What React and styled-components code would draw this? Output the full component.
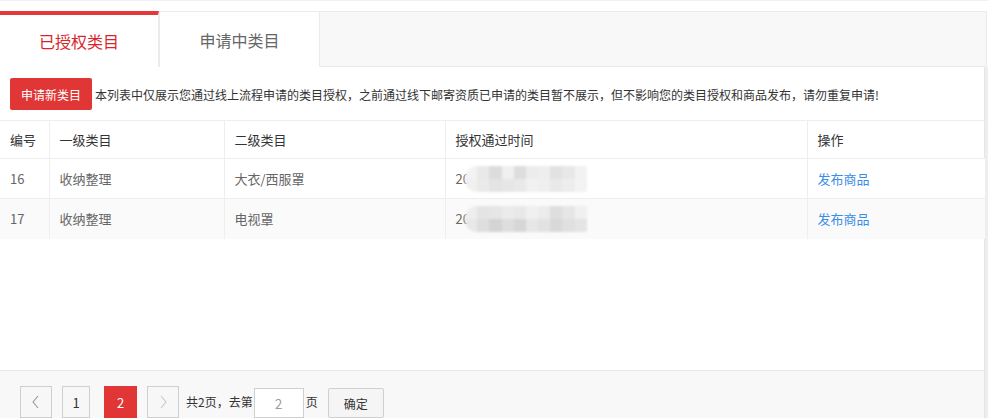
import React from "react";
import styled, { createGlobalStyle } from "styled-components";

const Global = createGlobalStyle`
  html, body { margin: 0; padding: 0; background: #fff; }
  body { font-family: "Noto Sans CJK SC", "Noto Sans", sans-serif; color: #333; }
  * { box-sizing: border-box; }
`;

const Page = styled.div`
  width: 988px;
  border-top: 1px solid #f0f0f0;
  padding-top: 10px;
`;

const TabBar = styled.div`
  display: flex;
  width: 987px;
  height: 56px;
  background: #f8f8f8;
  border: 1px solid #ebebeb;
  border-left: none;
`;

const Tab = styled.div`
  display: flex;
  align-items: center;
  justify-content: center;
  width: ${(p) => p.$w}px;
  margin-top: -1px;
  height: 56px;
  background: #fff;
  font-size: 16px;
  color: ${(p) => (p.$active ? "#d7262c" : "#666")};
  border-top: ${(p) => (p.$active ? "4px solid #e4393c" : "1px solid #ebebeb")};
  border-right: 1px solid #ebebeb;
  border-left: ${(p) => (p.$active ? "none" : "1px solid #ebebeb")};
`;

const Panel = styled.div`
  width: 985px;
  border-right: 1px solid #e6e6e6;
  box-shadow: 3px 0 0 #eeeeee;
`;

const Main = styled.div`
  height: 303px;
`;

const Notice = styled.div`
  display: flex;
  align-items: center;
  gap: 3px;
  padding: 11px 10px 10px;
`;

const RedButton = styled.button`
  height: 32px;
  width: 82px;
  padding: 0;
  border: none;
  border-radius: 2px;
  background: #e03636;
  color: #fff;
  font-family: inherit;
  font-size: 12px;
`;

const NoticeText = styled.span`
  font-size: 12px;
  color: #333;
  white-space: nowrap;
`;

const Table = styled.table`
  width: 985px;
  border-collapse: collapse;
  table-layout: fixed;
  font-size: 13px;
`;

const Th = styled.th`
  height: 38px;
  padding: 0 10px;
  text-align: left;
  font-weight: normal;
  color: #333;
  border-top: 1px solid #eee;
  border-bottom: 1px solid #eee;
  border-left: ${(p) => (p.$first ? "none" : "1px solid #eee")};
`;

const Tr = styled.tr`
  background: ${(p) => (p.$alt ? "#fafafa" : "#fff")};
`;

const Td = styled.td`
  height: 40px;
  padding: 0 10px;
  color: #666;
  border-bottom: ${(p) => (p.$last ? "none" : "1px solid #eee")};
  border-left: ${(p) => (p.$first ? "none" : "1px solid #eee")};
  white-space: nowrap;
`;

const Link = styled.a`
  color: #3a8ee6;
  text-decoration: none;
`;

const DateCell = styled.span`
  display: inline-flex;
  align-items: center;
`;

const Mosaic = styled.span`
  display: inline-grid;
  grid-template-columns: repeat(10, 12.2px);
  grid-template-rows: 13px 13px;
  margin-left: -5px;
  border-radius: 12px 2px 2px 12px;
  overflow: hidden;
  filter: blur(0.8px);
`;

const Cell = styled.span`
  display: block;
`;

const Footer = styled.div`
  height: 48px;
  background: #f8f8f8;
  border-top: 1px solid #e8e8e8;
  padding: 15px 0 0 20px;
  display: flex;
  align-items: flex-start;
  font-size: 12px;
  color: #333;
  overflow: hidden;
`;

const PageBtn = styled.div`
  display: flex;
  align-items: center;
  justify-content: center;
  flex: none;
  width: ${(p) => p.$w}px;
  height: 32px;
  margin-right: ${(p) => p.$mr}px;
  border: ${(p) => (p.$active ? "none" : "1px solid #cfcfcf")};
  background: ${(p) => (p.$active ? "#e03636" : "#f7f7f7")};
  color: ${(p) => (p.$active ? "#fff" : "#333")};
  font-size: 13px;
`;

const FooterText = styled.span`
  line-height: 32px;
  white-space: nowrap;
`;

const PageInput = styled.div`
  flex: none;
  width: 50px;
  height: 30px;
  margin: 2px 2px 0 1px;
  border: 1px solid #cfcfcf;
  background: #fff;
  color: #999;
  font-size: 13px;
  display: flex;
  align-items: center;
  justify-content: center;
`;

const Confirm = styled.div`
  flex: none;
  width: 56px;
  height: 30px;
  margin: 2px 0 0 10px;
  border: 1px solid #cfcfcf;
  background: #f5f5f5;
  display: flex;
  align-items: center;
  justify-content: center;
  border-radius: 2px;
`;

const Chevron = ({ dir, color }) => (
  <svg width="10" height="14" viewBox="0 0 10 14">
    <polyline
      points={dir === "left" ? "7,1 2,7 7,13" : "3,1 8,7 3,13"}
      fill="none"
      stroke={color}
      strokeWidth="1.1"
    />
  </svg>
);

const shades = [
  ["#f3f3f3", "#e9e9e9", "#dcdcdc", "#f0f0f0", "#dddddd", "#ececec", "#eeeeee", "#e2e2e2", "#e8e8e8", "#f2f2f2"],
  ["#f0f0f0", "#eaeaea", "#e4e4e4", "#e6e6e6", "#e9e9e9", "#f1f1f1", "#efefef", "#e9e9e9", "#ededed", "#f3f3f3"],
];
const shades2 = [
  ["#eeeeee", "#e4e4e4", "#e6e6e6", "#ebebeb", "#e8e8e8", "#f0f0f0", "#ececec", "#dedede", "#e6e6e6", "#f0f0f0"],
  ["#e8e8e8", "#dedede", "#d4d4d4", "#dedede", "#d6d6d6", "#e6e6e6", "#e2e2e2", "#d8d8d8", "#e0e0e0", "#e4e4e4"],
];

const Blur = ({ data }) => (
  <Mosaic>
    {data.flat().map((c, i) => (
      <Cell key={i} style={{ background: c }} />
    ))}
  </Mosaic>
);

const rows = [
  { id: 16, a: "收纳整理", b: "大衣/西服罩", m: shades },
  { id: 17, a: "收纳整理", b: "电视罩", m: shades2 },
];

export default function App() {
  return (
    <>
      <Global />
      <Page>
        <TabBar>
          <Tab $active $w={159}>已授权类目</Tab>
          <Tab $w={161}>申请中类目</Tab>
        </TabBar>
        <Panel>
          <Main>
            <Notice>
              <RedButton>申请新类目</RedButton>
              <NoticeText>
                本列表中仅展示您通过线上流程申请的类目授权，之前通过线下邮寄资质已申请的类目暂不展示，但不影响您的类目授权和商品发布，请勿重复申请!
              </NoticeText>
            </Notice>
            <Table>
              <colgroup>
                <col style={{ width: 49 }} />
                <col style={{ width: 175 }} />
                <col style={{ width: 221 }} />
                <col style={{ width: 362 }} />
                <col style={{ width: 178 }} />
              </colgroup>
              <thead>
                <tr>
                  <Th $first>编号</Th>
                  <Th>一级类目</Th>
                  <Th>二级类目</Th>
                  <Th>授权通过时间</Th>
                  <Th>操作</Th>
                </tr>
              </thead>
              <tbody>
                {rows.map((r, i) => (
                  <Tr key={r.id} $alt={i % 2 === 1}>
                    <Td $first $last={i === rows.length - 1}>{r.id}</Td>
                    <Td $last={i === rows.length - 1}>{r.a}</Td>
                    <Td $last={i === rows.length - 1}>{r.b}</Td>
                    <Td $last={i === rows.length - 1}>
                      <DateCell>
                        20
                        <Blur data={r.m} />
                      </DateCell>
                    </Td>
                    <Td $last={i === rows.length - 1}>
                      <Link href="#">发布商品</Link>
                    </Td>
                  </Tr>
                ))}
              </tbody>
            </Table>
          </Main>
          <Footer>
            <PageBtn $w={32} $mr={10}>
              <Chevron dir="left" color="#999" />
            </PageBtn>
            <PageBtn $w={28} $mr={14}>1</PageBtn>
            <PageBtn $w={33} $mr={10} $active>2</PageBtn>
            <PageBtn $w={32} $mr={7}>
              <Chevron dir="right" color="#c8c8c8" />
            </PageBtn>
            <FooterText>共2页，去第</FooterText>
            <PageInput>2</PageInput>
            <FooterText>页</FooterText>
            <Confirm>确定</Confirm>
          </Footer>
        </Panel>
      </Page>
    </>
  );
}
